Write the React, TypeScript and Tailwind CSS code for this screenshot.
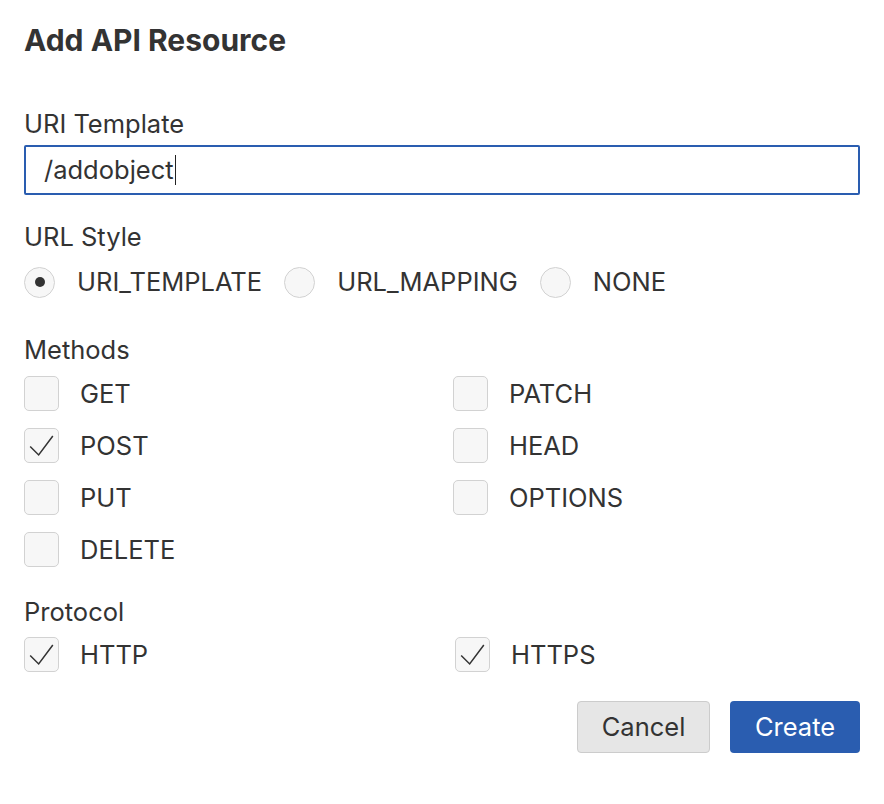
const METHODS_LEFT = ["GET", "POST", "PUT", "DELETE"];
const METHODS_RIGHT = ["PATCH", "HEAD", "OPTIONS"];

function Check({ label, checked }: { label: string; checked?: boolean }) {
  return (
    <div className="flex h-[35px] items-center gap-[21px]">
      <div className="flex h-[35px] w-[35px] items-center justify-center rounded-[5px] border border-[#d2d2d2] bg-[#f7f7f7]">
        {checked && (
          <svg width="35" height="35" viewBox="0 0 35 35" fill="none">
            <polyline points="5.5,18.5 14.5,27.5 29.5,7.5" stroke="#333" strokeWidth="1.6" />
          </svg>
        )}
      </div>
      <span>{label}</span>
    </div>
  );
}

function Radio({ label, selected }: { label: string; selected?: boolean }) {
  return (
    <div className="flex items-center gap-[22px]">
      <div className="flex h-[31px] w-[31px] items-center justify-center rounded-full border border-[#d2d2d2] bg-[#f7f7f7]">
        {selected && <div className="h-[10px] w-[10px] rounded-full bg-[#333]" />}
      </div>
      <span>{label}</span>
    </div>
  );
}

export default function App() {
  const checked = ["POST"];

  return (
    <div className="min-h-screen bg-white px-[24px] pt-[22px] font-['Inter',sans-serif] text-[25.5px] leading-[28px] text-[#333]">
      <h1 className="text-[30px] leading-[36px] font-bold">Add API Resource</h1>

      <div className="mt-[52px]">URI Template</div>
      <div className="mt-[7px] flex h-[50px] w-[836px] items-center rounded-[2px] border-2 border-[#2a5db0] pl-[18px]">
        <span>/addobject</span>
        <span className="ml-[1px] h-[30px] w-[1.5px] bg-[#222]" />
      </div>

      <div className="mt-[28px]">URL Style</div>
      <div className="mt-[15px] flex h-[32px] items-center gap-[22px]">
        <Radio label="URI_TEMPLATE" selected />
        <Radio label="URL_MAPPING" />
        <Radio label="NONE" />
      </div>

      <div className="mt-[38px]">Methods</div>
      <div className="mt-[12px] grid w-[836px] grid-cols-[429px_1fr]">
        <div className="flex flex-col gap-[17px]">
          {METHODS_LEFT.map((m) => (
            <Check key={m} label={m} checked={checked.includes(m)} />
          ))}
        </div>
        <div className="flex flex-col gap-[17px]">
          {METHODS_RIGHT.map((m) => (
            <Check key={m} label={m} checked={checked.includes(m)} />
          ))}
        </div>
      </div>

      <div className="mt-[31px]">Protocol</div>
      <div className="mt-[11px] grid w-[836px] grid-cols-[431px_1fr]">
        <Check label="HTTP" checked />
        <Check label="HTTPS" checked />
      </div>

      <div className="mt-[29px] flex w-[836px] justify-end gap-[20px]">
        <button className="h-[52px] w-[133px] rounded-[4px] border border-[#cccccc] bg-[#e6e6e6] text-[#333]">
          Cancel
        </button>
        <button className="h-[52px] w-[130px] rounded-[4px] bg-[#2a5db0] text-white">Create</button>
      </div>
    </div>
  );
}
